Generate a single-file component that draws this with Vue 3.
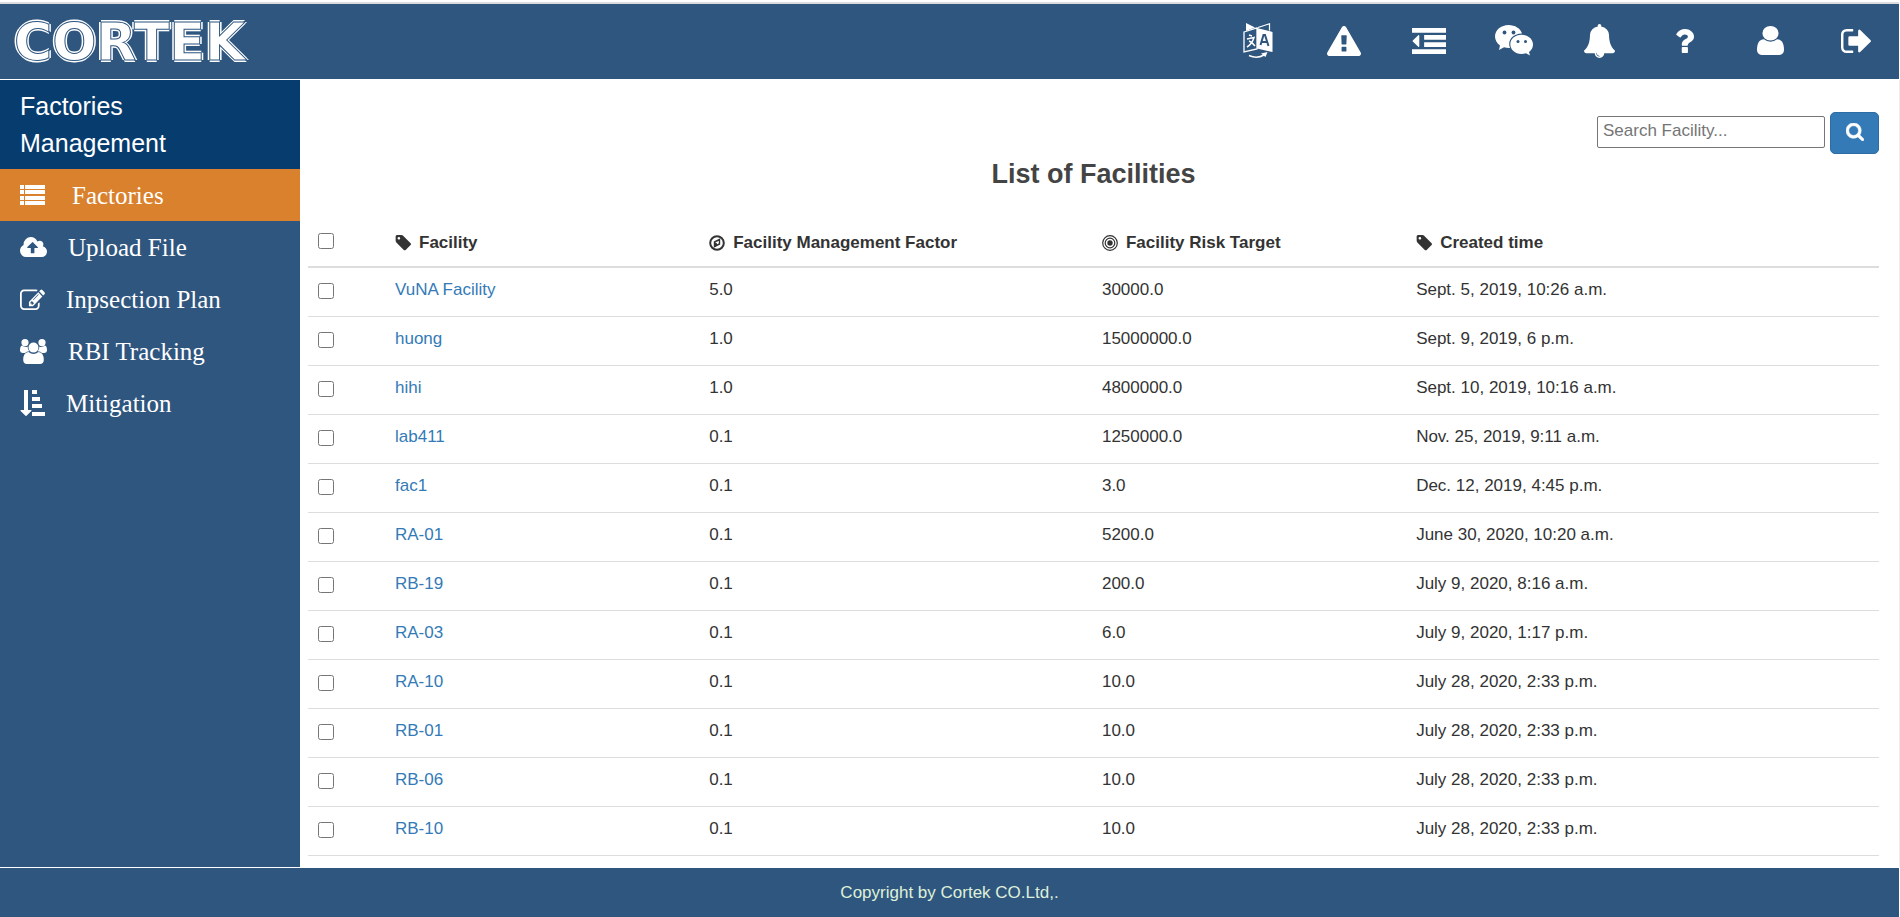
<script setup>
import { ref } from 'vue'

const query = ref('')

const tools = [
  { name: 'Language', w: 30, h: 35, box: '0 0 30 35', lang: true },
  { name: 'Warnings', w: 34, h: 30, box: '0 0 1792 1664', path: 'M1024 1375v-190q0-14-9.500-23.500t-22.500-9.500h-192q-13 0-22.500 9.500t-9.500 23.500v190q0 14 9.500 23.500t22.500 9.500h192q13 0 22.500-9.500t9.500-23.500zm-2-374l18-459q0-12-10-19-13-11-24-11h-220q-11 0-24 11-10 7-10 21l17 457q0 10 10 16.500t24 6.500h185q14 0 23.500-6.500t10.500-16.500zm-14-934l768 1408q35 63-2 126-17 29-46.500 46t-63.500 17h-1536q-34 0-63.500-17t-46.500-46q-37-63-2-126l768-1408q17-31 47-49t65-18 65 18 47 49z' },
  { name: 'Toggle menu', w: 34, h: 26, box: '0 128 1792 1408', path: 'M384 544v576q0 13-9.500 22.500t-22.500 9.500q-14 0-23-9l-288-288q-9-9-9-23t9-23l288-288q9-9 23-9 13 0 22.500 9.500t9.500 22.500zM0 1280h1792v256H0zM640 896h1152v256H640zM640 512h1152v256H640zM0 128h1792v256H0z' },
  { name: 'Messages', w: 38, h: 31, box: '0 0 38 31', chat: true },
  { name: 'Notifications', w: 31, h: 34, box: '64 0 1664 1792', path: 'M912 1696q0-16-16-16-59 0-101.500-42.500t-42.500-101.500q0-16-16-16t-16 16q0 73 51.500 124.500t124.500 51.500q16 0 16-16zm816-288q0 52-38 90t-90 38h-448q0 106-75 181t-181 75-181-75-75-181h-448q-52 0-90-38t-38-90q50-42 91-88t85-119.500 74.500-158.500 50-206 19.500-260q0-152 117-282.500t307-158.500q-8-19-8-39 0-40 28-68t68-28 68 28 28 68q0 20-8 39 190 28 307 158.500t117 282.500q0 139 19.500 260t50 206 74.500 158.500 85 119.500 91 88z' },
  { name: 'Help', w: 18, h: 24, box: '468 256 936 1280', path: 'M1088 1256v240q0 16-12 28t-28 12h-240q-16 0-28-12t-12-28v-240q0-16 12-28t28-12h240q16 0 28 12t12 28zm316-600q0 54-15.500 101t-35 76.500-55 59.500-57.500 43.500-61 35.500q-41 23-68.500 65t-27.500 67q0 17-12 32.500t-28 15.500h-240q-15 0-25.500-18.500t-10.500-37.500v-45q0-83 65-156.500t143-108.500q59-27 84-56t25-76q0-42-46.500-74t-107.500-32q-65 0-108 29-35 25-107 115-13 16-31 16-12 0-25-8l-164-125q-13-10-15.500-25t5.500-28q160-266 464-266 80 0 161 31t146 83 106 127.500 41 158.500z' },
  { name: 'Account', w: 27, h: 29, box: '256 128 1280 1536', path: 'M1536 1399q0 109-62.500 187t-150.500 78h-854q-88 0-150.500-78t-62.500-187q0-85 8.500-160.500t31.500-152 58.500-131 94-89 134.500-34.500q131 128 313 128t313-128q76 0 134.500 34.500t94 89 58.500 131 31.500 152 8.500 160.500zm-256-887q0 159-112.500 271.500t-271.500 112.500-271.500-112.500-112.500-271.500 112.500-271.500 271.500-112.500 271.500 112.500 112.500 271.500z' },
  { name: 'Sign out', w: 30, h: 24, box: '64 256 1568 1280', path: 'M704 1440q0 4 1 20t.5 26.500-3 23.500-10 19.500-20.500 6.500h-320q-119 0-203.500-84.500t-84.500-203.500v-704q0-119 84.500-203.500t203.500-84.500h320q13 0 22.500 9.500t9.500 22.500q0 4 1 20t.5 26.500-3 23.500-10 19.500-20.500 6.500h-320q-66 0-113 47t-47 113v704q0 66 47 113t113 47h312l11.500 1 11.500 3 8 5.500 7 9 2 13.500zm928-544q0 26-19 45l-544 544q-19 19-45 19t-45-19-19-45v-288h-448q-26 0-45-19t-19-45v-384q0-26 19-45t45-19h448v-288q0-26 19-45t45-19 45 19l544 544q19 19 19 45z' }
]

const menu = [
  { label: 'Factories', active: true, w: 25, h: 20, box: '0 0 25 20', path: 'M0 0h4v4H0zM5 0h20v4H5zM0 5h4v4H0zM5 5h20v4H5zM0 11h4v4H0zM5 11h20v4H5zM0 16h4v4H0zM5 16h20v4H5z' },
  { label: 'Upload File', w: 27, h: 20, box: '-64 128 1920 1408', path: 'M1216 864q0-14-9-23l-352-352q-9-9-23-9t-23 9l-351 351q-10 12-10 24 0 14 9 23t23 9h224v352q0 13 9.500 22.500t22.500 9.500h192q13 0 22.500-9.500t9.500-22.500v-352h224q13 0 22.500-9.500t9.500-22.500zm640 288q0 159-112.500 271.500t-271.500 112.500h-1088q-185 0-316.500-131.500t-131.500-316.500q0-130 70-240t188-165q-2-30-2-43 0-212 150-362t362-150q156 0 285.500 87t188.500 231q71-62 166-62 106 0 181 75t75 181q0 76-41 138 130 31 213.500 135.500t83.500 238.500z' },
  { label: 'Inpsection Plan', w: 25, h: 21, box: '0 100 1792 1436', path: 'M888 1184l116-116-152-152-116 116v56h96v96h56zm440-720q-16-16-33 1l-350 350q-17 17-1 33t33-1l350-350q17-17 1-33zm80 594v190q0 119-84.500 203.500t-203.500 84.500h-832q-119 0-203.500-84.500t-84.500-203.500v-832q0-119 84.500-203.500t203.500-84.500h832q63 0 117 25 15 7 18 23 3 17-9 29l-49 49q-14 14-32 8-23-6-45-6h-832q-66 0-113 47t-47 113v832q0 66 47 113t113 47h832q66 0 113-47t47-113v-126q0-13 9-22l64-64q15-15 35-7t20 29zm-96-738l288 288-672 672h-288v-288zm444 132l-92 92-288-288 92-92q28-28 68-28t68 28l152 152q28 28 28 68t-28 68z' },
  { label: 'RBI Tracking', w: 27, h: 25, box: '0 0 27 25', path: 'M5 0a3.600 3.600 0 1 1 0 7.200A3.600 3.600 0 0 1 5 0zM22 0a3.600 3.600 0 1 1 0 7.200A3.600 3.600 0 0 1 22 0zM2 6.500Q5 8.800 7.600 7.400Q7.600 10.500 9.300 12.300Q6.500 12.400 5 14H2.500Q0 13.800 0 11.500Q0 7 2 6.500zM25 6.500Q22 8.800 19.400 7.400Q19.400 10.500 17.700 12.300Q20.500 12.400 22 14H24.500Q27 13.800 27 11.500Q27 7 25 6.500zM13.500 3.600a5 5 0 1 1 0 10a5 5 0 0 1 0-10zM8.500 13Q13.500 16.800 18.500 13Q23.800 13.500 23.800 21Q23.600 25 20 25H7Q3.400 25 3.200 21Q3.200 13.500 8.500 13z' },
  { label: 'Mitigation', w: 25, h: 26, box: '0 0 25 26', path: 'M4 0h4v20h3q.8.200.3 1L6.500 25.800q-.5.400-1 0L.6 21q-.5-.8.300-1H4zM12 0h5v4h-5zM12 7h8v4h-8zM12 14h10v4H12zM12 22h13v4H12z' }
]

const columns = [
  { label: 'Facility', icon: 'tag' },
  { label: 'Facility Management Factor', icon: 'compass' },
  { label: 'Facility Risk Target', icon: 'target' },
  { label: 'Created time', icon: 'tag' }
]

const facilities = [
  ['VuNA Facility', '5.0', '30000.0', 'Sept. 5, 2019, 10:26 a.m.'],
  ['huong', '1.0', '15000000.0', 'Sept. 9, 2019, 6 p.m.'],
  ['hihi', '1.0', '4800000.0', 'Sept. 10, 2019, 10:16 a.m.'],
  ['lab411', '0.1', '1250000.0', 'Nov. 25, 2019, 9:11 a.m.'],
  ['fac1', '0.1', '3.0', 'Dec. 12, 2019, 4:45 p.m.'],
  ['RA-01', '0.1', '5200.0', 'June 30, 2020, 10:20 a.m.'],
  ['RB-19', '0.1', '200.0', 'July 9, 2020, 8:16 a.m.'],
  ['RA-03', '0.1', '6.0', 'July 9, 2020, 1:17 p.m.'],
  ['RA-10', '0.1', '10.0', 'July 28, 2020, 2:33 p.m.'],
  ['RB-01', '0.1', '10.0', 'July 28, 2020, 2:33 p.m.'],
  ['RB-06', '0.1', '10.0', 'July 28, 2020, 2:33 p.m.'],
  ['RB-10', '0.1', '10.0', 'July 28, 2020, 2:33 p.m.']
]
</script>

<template>
  <div class="page">
    <header class="topbar">
      <a class="brand" href="#">CORTEK</a>
      <nav class="tools" aria-label="Tools">
        <a v-for="t in tools" :key="t.name" href="#" :aria-label="t.name">
          <svg :width="t.w" :height="t.h" :viewBox="t.box" preserveAspectRatio="none" fill="currentColor">
            <g v-if="t.lang">
              <path d="M3 0L12 4.500L3 8z" />
              <path d="M15 4.500L26.500 .8V7.500" fill="none" stroke="currentColor" stroke-width="1.200" />
              <path d="M1 9L14 5V26L1 29z" fill="none" stroke="currentColor" stroke-width="1.300" />
              <path d="M14 5L29.500 9V29L14 25.500z" />
              <path d="M17.500 22L20.500 12H22L25.500 23M18.500 19H24" fill="none" stroke="#2f567f" stroke-width="2" />
              <path d="M6 12L9 13M4 16L11 14.500Q9 21 4 24M6 18Q9 19 12 23" fill="none" stroke="currentColor" stroke-width="1.500" />
              <path d="M6 32.500Q14 36 21 32" fill="none" stroke="currentColor" stroke-width="1.500" />
              <path d="M18 30.500L24.500 29L22.500 34z" />
            </g>
            <g v-else-if="t.chat">
              <path d="M13.500 0C6 0 0 5 0 11.500C0 15 2 18.500 5 20.500L4 25L9 22.300Q12 23.200 15 23C12 15 18 8.500 27 8.500C25.500 3.500 20 0 13.500 0z" />
              <path d="M26.500 9.700C20 9.700 15.300 14 15.300 19.300S20 29 26.500 29Q29 29 31 28.200L35 30.500L34 27C36.500 25 38 22.500 38 19.500C38 14 33 9.700 26.500 9.700z" />
              <g fill="#2f567f">
                <circle cx="9.500" cy="7.500" r="1.900" /><circle cx="18.500" cy="7.500" r="1.900" />
                <circle cx="23" cy="16.500" r="1.500" /><circle cx="30.500" cy="16.500" r="1.500" />
              </g>
            </g>
            <path v-else :d="t.path" />
          </svg>
        </a>
      </nav>
    </header>

    <div class="body">
      <aside class="sidebar">
        <h2>Factories Management</h2>
        <nav aria-label="Sections">
          <a v-for="m in menu" :key="m.label" href="#" :class="{ active: m.active }">
            <svg :width="m.w" :height="m.h" :viewBox="m.box" preserveAspectRatio="none" fill="currentColor"><path :d="m.path" /></svg>
            <span>{{ m.label }}</span>
          </a>
        </nav>
      </aside>

      <main class="content">
        <form class="search" @submit.prevent>
          <input v-model="query" type="text" placeholder="Search Facility..." aria-label="Search Facility">
          <button type="submit" aria-label="Search">
            <svg width="18" height="18" viewBox="64 128 1664 1664" fill="currentColor" stroke="currentColor" stroke-width="50">
              <path d="M1216 832q0-185-131.500-316.500t-316.500-131.500-316.500 131.500-131.500 316.500 131.500 316.500 316.500 131.500 316.500-131.500 131.500-316.500zm512 832q0 52-38 90t-90 38q-54 0-90-38l-343-342q-179 124-399 124-143 0-273.500-55.500t-225-150-150-225-55.500-273.500 55.500-273.500 150-225 225-150 273.500-55.500 273.500 55.500 225 150 150 225 55.500 273.500q0 220-124 399l343 343q37 37 37 90z" />
            </svg>
          </button>
        </form>
        <h1>List of Facilities</h1>
        <table>
          <colgroup>
            <col class="c-check"><col class="c-name"><col class="c-factor"><col class="c-target"><col>
          </colgroup>
          <thead>
            <tr>
              <th><input type="checkbox" aria-label="Select all facilities"></th>
              <th v-for="c in columns" :key="c.label" scope="col">
                <span class="th">
                  <svg v-if="c.icon === 'tag'" width="16" height="16" viewBox="64 128 1580 1580" fill="currentColor">
                    <path d="M576 448q0-53-37.500-90.500t-90.500-37.500-90.500 37.500-37.500 90.500 37.500 90.500 90.500 37.500 90.500-37.500 37.500-90.500zm1067 576q0 53-37 90l-491 492q-39 37-91 37-53 0-90-37l-715-716q-38-37-64.500-101t-26.500-117v-416q0-52 38-90t90-38h416q53 0 117 26.500t102 64.500l715 714q37 39 37 91z" />
                  </svg>
                  <svg v-else-if="c.icon === 'compass'" width="16" height="16" viewBox="0 0 16 16" fill="none" stroke="currentColor">
                    <circle cx="8" cy="8" r="6.800" stroke-width="2" />
                    <path d="M5.500 7L10.500 4.500V9L5.500 11.500z" stroke-width="1.400" />
                    <path d="M5.500 7L8 8.500V10.500L5.500 12z" fill="currentColor" stroke="none" />
                  </svg>
                  <svg v-else width="16" height="16" viewBox="0 0 16 16" fill="none" stroke="currentColor" stroke-width="1.200">
                    <circle cx="8" cy="8" r="7.300" /><circle cx="8" cy="8" r="4.800" />
                    <circle cx="8" cy="8" r="2.700" fill="currentColor" stroke="none" />
                  </svg>
                  {{ c.label }}
                </span>
              </th>
            </tr>
          </thead>
          <tbody>
            <tr v-for="f in facilities" :key="f[0]">
              <td><input type="checkbox" :aria-label="'Select ' + f[0]"></td>
              <td><a href="#">{{ f[0] }}</a></td>
              <td>{{ f[1] }}</td>
              <td>{{ f[2] }}</td>
              <td>{{ f[3] }}</td>
            </tr>
          </tbody>
        </table>
      </main>
    </div>

    <footer class="footer">Copyright by Cortek CO.Ltd,.</footer>
  </div>
</template>

<style>
body {
  margin: 0;
  background: #fff;
}
</style>

<style scoped>
.page {
  box-sizing: border-box;
  min-height: 100vh;
  padding-top: 2px;
  display: flex;
  flex-direction: column;
  font-family: "Liberation Sans", Arial, sans-serif;
  font-size: 17px;
  line-height: 25px;
  color: #333;
}
.page * {
  box-sizing: border-box;
}
a {
  color: #337ab7;
  text-decoration: none;
}
svg {
  display: block;
  flex: none;
}
.topbar {
  display: flex;
  justify-content: space-between;
  height: 78px;
  border-top: 2px solid #dcdcdf;
  border-bottom: 1px solid #fff;
  margin-right: 1px;
  background: #2f567f;
}
.brand {
  display: flex;
  align-items: center;
  padding-left: 14px;
  color: #fff;
  font-family: "DejaVu Sans", Verdana, sans-serif;
  font-size: 52px;
  line-height: 64px;
  font-weight: bold;
  -webkit-text-stroke: 1px #2f567f;
  text-shadow: 2px 0 #fff, -2px 0 #fff, 0 2px #fff, 0 -2px #fff;
}
.tools {
  display: grid;
  grid-template-columns: repeat(8, 1fr);
  width: 36%;
}
.tools a {
  display: flex;
  align-items: center;
  justify-content: center;
  padding-bottom: 2px;
  color: #fff;
}
.body {
  flex: 1;
  display: flex;
  border-bottom: 1px solid #fff;
}
.sidebar {
  flex: none;
  width: 300px;
  background: #2f567f;
}
.sidebar h2 {
  margin: 0;
  padding: 8px 100px 7px 20px;
  background: #063c6e;
  color: #fff;
  font-size: 25px;
  line-height: 37px;
  font-weight: normal;
}
.sidebar a {
  display: flex;
  align-items: center;
  gap: 21px;
  height: 52px;
  padding: 0 20px;
  color: #fff;
  font-family: "Liberation Serif", "Times New Roman", serif;
  font-size: 25px;
  line-height: 36px;
}
.sidebar a.active {
  gap: 27px;
  background: #d9812d;
}
.sidebar span {
  padding-top: 2px;
}
.content {
  flex: 1;
  min-width: 0;
  padding: 32px 20px 11px 8px;
  border-right: 1px solid #ececec;
}
.search {
  display: flex;
  justify-content: flex-end;
  align-items: center;
  gap: 5px;
}
.search input {
  width: 228px;
  height: 32px;
  margin-bottom: 2px;
  padding: 0 5px 2px;
  border: 1px solid #767676;
  border-radius: 2px;
  font: inherit;
}
.search input::placeholder {
  color: #757575;
}
.search button {
  display: flex;
  align-items: center;
  justify-content: center;
  width: 49px;
  height: 42px;
  padding: 0 0 2px;
  border: 1px solid #2e6da4;
  border-radius: 5px;
  background: #337ab7;
  color: #fff;
}
h1 {
  margin: 5px 0 30px;
  text-align: center;
  font-size: 27px;
  line-height: 30px;
  color: #444;
}
table {
  width: 100%;
  table-layout: fixed;
  border-collapse: separate;
  border-spacing: 0;
}
.c-check { width: 77px; }
.c-name { width: 20%; }
.c-factor { width: 25%; }
.c-target { width: 20%; }
th,
td {
  height: 49px;
  padding: 9px 10px;
  text-align: left;
  vertical-align: top;
  border-bottom: 1px solid #ddd;
}
th {
  padding-top: 11px;
  border-bottom-width: 2px;
}
.th {
  display: flex;
  align-items: center;
  gap: 8px;
}
table input {
  display: block;
  width: 16px;
  height: 16px;
  margin: 6px 0 0;
}
th input {
  margin-top: 3px;
}
.footer {
  display: flex;
  align-items: center;
  justify-content: center;
  height: 49px;
  margin-right: 1px;
  background: #2f567f;
  color: #dff0d8;
}
</style>
